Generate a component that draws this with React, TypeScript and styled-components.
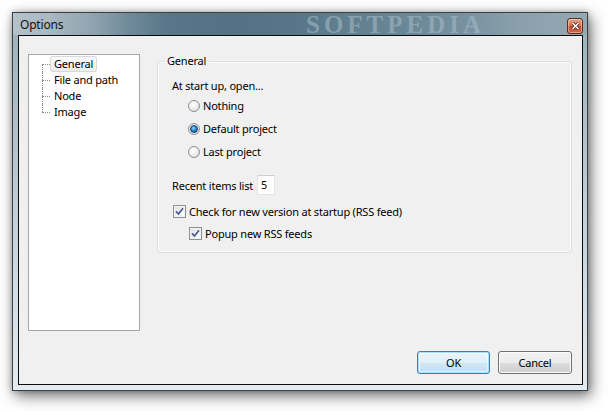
import * as React from 'react';
import styled, { createGlobalStyle } from 'styled-components';

const GlobalStyle = createGlobalStyle`
  html, body {
    margin: 0;
    padding: 0;
    background: #ffffff;
  }
  body {
    font-family: "Noto Sans", "Open Sans", sans-serif;
    font-size: 11px;
    letter-spacing: -0.2px;
    color: #000;
  }
  * {
    box-sizing: border-box;
  }
`;

const Page = styled.div`
  width: 608px;
  height: 411px;
  padding: 12px 0 0 12px;
  overflow: hidden;
`;

const Window = styled.div`
  width: 576px;
  height: 379px;
  display: flex;
  flex-direction: column;
  border: 1px solid #3c4146;
  background-color: #c6d3dc;
  box-shadow: 3px 5px 14px rgba(0, 0, 0, 0.55), 0 0 6px rgba(0, 0, 0, 0.25);
`;

const TitleBar = styled.div`
  position: relative;
  height: 22px;
  flex: none;
  display: flex;
  align-items: center;
  justify-content: space-between;
  padding: 1px 4px 0 7px;
  background-color: #5f7d8e;
  background-image: linear-gradient(90deg, #b4c2ca 0%, #aab9c2 6%, #8fa3af 14%, #718b9b 20%, #577688 27%, #537385 38%, #567688 48%, #607f8f 58%, #678594 66%, #7690a0 78%, #8aa0ac 88%, #96a9b3 100%);
`;

const TitleText = styled.span`
  font-size: 12px;
  color: #111;
  position: relative;
  z-index: 1;
`;

const Watermark = styled.span`
  position: absolute;
  left: 293px;
  top: 0;
  height: 22px;
  line-height: 24px;
  font-family: "Liberation Serif", "DejaVu Serif", serif;
  font-weight: bold;
  font-size: 25px;
  letter-spacing: 4px;
  color: rgba(170, 190, 202, 0.55);
  overflow: hidden;
  pointer-events: none;
`;

const CloseButton = styled.div`
  position: relative;
  z-index: 1;
  width: 16px;
  height: 16px;
  margin-top: 2px;
  border: 1px solid #5a2c22;
  border-radius: 3px;
  background: linear-gradient(180deg, #e9a890 0%, #d5755c 45%, #c24a2e 55%, #d4674a 100%);
  box-shadow: inset 0 0 0 1px rgba(255, 220, 200, 0.5);
  display: flex;
  align-items: center;
  justify-content: center;
`;

const Body = styled.div`
  flex: 1;
  display: flex;
  padding: 0 4px 5px 5px;
  background: linear-gradient(180deg, #9fb3bf 0%, #b6c6d0 35%, #d4dee6 75%, #e4ebf1 100%);
`;

const Client = styled.div`
  flex: 1;
  display: flex;
  flex-direction: column;
  background: #f0f0f0;
  border: 1px solid #0c0c0c;
  padding: 18px 10px 10px 9px;
`;

const TopRow = styled.div`
  display: flex;
  align-items: flex-start;
  gap: 17px;
`;

const Tree = styled.div`
  width: 112px;
  height: 277px;
  flex: none;
  background: #ffffff;
  border: 1px solid #a5a5a5;
  padding-top: 1px;
`;

const TreeItem = styled.div<{ $first?: boolean; $last?: boolean }>`
  position: relative;
  height: 16px;
  display: flex;
  align-items: center;
  padding-left: 21px;

  &::before {
    content: '';
    position: absolute;
    left: 13px;
    top: 8px;
    width: 8px;
    border-top: 1px dotted #8c8c8c;
  }

  &::after {
    content: '';
    position: absolute;
    left: 13px;
    top: ${(p) => (p.$first ? '8px' : '0')};
    height: ${(p) => (p.$first || p.$last ? '8px' : '16px')};
    border-left: 1px dotted #8c8c8c;
  }
`;

const TreeLabel = styled.span<{ $selected?: boolean }>`
  height: 16px;
  line-height: 14px;
  padding: 0 3px;
  border: 1px solid ${(p) => (p.$selected ? '#d9d9d9' : 'transparent')};
  border-radius: 2px;
  background: ${(p) =>
    p.$selected ? 'linear-gradient(180deg, #fbfbfb 0%, #ececec 100%)' : 'transparent'};
`;

const GroupBox = styled.fieldset`
  flex: 1;
  margin: 0;
  padding: 0;
  min-width: 0;
  border: 1px solid #d5dfe5;
  border-radius: 3px;
  box-shadow: inset 0 0 0 1px rgba(255, 255, 255, 0.7);
`;

const Legend = styled.legend`
  margin-left: 6px;
  padding: 0 3px;
  line-height: 14px;
  height: 14px;
`;

const GroupContent = styled.div`
  display: flex;
  flex-direction: column;
  padding: 0 8px 8px 14px;
`;

const Row = styled.div<{ $h: number; $top?: number; $indent?: number; $gap?: number }>`
  height: ${(p) => p.$h}px;
  margin-top: ${(p) => p.$top ?? 0}px;
  padding-left: ${(p) => p.$indent ?? 0}px;
  display: flex;
  align-items: center;
  gap: ${(p) => p.$gap ?? 3}px;
`;

const RadioCircle = styled.span<{ $checked?: boolean }>`
  width: 12px;
  height: 12px;
  flex: none;
  border-radius: 50%;
  border: 1px solid #8e8f8f;
  background: radial-gradient(circle at 40% 35%, #ffffff 0%, #f0f0f0 45%, #d4d4d4 100%);
  display: flex;
  align-items: center;
  justify-content: center;

  &::after {
    content: '';
    display: ${(p) => (p.$checked ? 'block' : 'none')};
    width: 6px;
    height: 6px;
    border-radius: 50%;
    border: 1px solid #0d3a66;
    background: radial-gradient(circle at 40% 35%, #8fd4fb 0%, #2a8fd6 45%, #0b5590 100%);
  }
`;

const CheckBox = styled.span`
  width: 13px;
  height: 13px;
  flex: none;
  border: 1px solid #8e8f8f;
  background: linear-gradient(135deg, #dcdcdc 0%, #f4f4f4 60%, #ffffff 100%);
  box-shadow: inset 0 0 0 1px #f4f4f4;
  display: flex;
  align-items: center;
  justify-content: center;
`;

const NumberBox = styled.div`
  width: 18px;
  height: 20px;
  margin-left: 4px;
  background: #ffffff;
  border: 1px solid #e2e6ea;
  border-top-color: #c9ced4;
  padding-left: 3px;
  line-height: 18px;
`;

const ButtonRow = styled.div`
  margin-top: auto;
  display: flex;
  justify-content: flex-end;
  gap: 8px;
`;

const Button = styled.div<{ $default?: boolean; $w: number }>`
  width: ${(p) => p.$w}px;
  height: 23px;
  border-radius: 3px;
  display: flex;
  align-items: center;
  justify-content: center;
  border: 1px solid ${(p) => (p.$default ? '#3c7fb1' : '#707070')};
  background: ${(p) =>
    p.$default
      ? 'linear-gradient(180deg, #eaf5fc 0%, #e0eff9 50%, #cfe6f5 51%, #c4e0f2 100%)'
      : 'linear-gradient(180deg, #f2f2f2 0%, #ebebeb 50%, #dddddd 51%, #cfcfcf 100%)'};
  box-shadow: ${(p) =>
    p.$default
      ? 'inset 0 0 0 1px #a7e0f8, inset 0 0 0 2px rgba(255,255,255,0.5)'
      : 'inset 0 0 0 1px #fcfcfc'};
`;

const Check = () => (
  <svg width="9" height="9" viewBox="0 0 9 9">
    <path d="M1 4.4 L3.5 7 L8 1.3" fill="none" stroke="#4a5f8f" strokeWidth="1.8" />
  </svg>
);

const CloseGlyph = () => (
  <svg width="9" height="8" viewBox="0 0 9 8">
    <path d="M1.5 1 L7.5 7 M7.5 1 L1.5 7" stroke="#4a1a10" strokeWidth="3" />
    <path d="M1.5 1 L7.5 7 M7.5 1 L1.5 7" stroke="#ffffff" strokeWidth="1.6" />
  </svg>
);

const treeItems = ['General', 'File and path', 'Node', 'Image'];

const App = () => (
  <Page>
    <GlobalStyle />
    <Window>
      <TitleBar>
        <TitleText>Options</TitleText>
        <Watermark>SOFTPEDIA</Watermark>
        <CloseButton>
          <CloseGlyph />
        </CloseButton>
      </TitleBar>
      <Body>
        <Client>
          <TopRow>
            <Tree>
              {treeItems.map((name, i) => (
                <TreeItem key={name} $first={i === 0} $last={i === treeItems.length - 1}>
                  <TreeLabel $selected={i === 0}>{name}</TreeLabel>
                </TreeItem>
              ))}
            </Tree>
            <GroupBox>
              <Legend>General</Legend>
              <GroupContent>
                <Row $h={18} $top={8}>At start up, open...</Row>
                <Row $h={23} $indent={16}>
                  <RadioCircle />
                  Nothing
                </Row>
                <Row $h={23} $indent={16}>
                  <RadioCircle $checked />
                  Default project
                </Row>
                <Row $h={23} $indent={16}>
                  <RadioCircle />
                  Last project
                </Row>
                <Row $h={20} $top={12} $gap={0}>
                  Recent items list
                  <NumberBox>5</NumberBox>
                </Row>
                <Row $h={22} $top={5} $indent={1}>
                  <CheckBox>
                    <Check />
                  </CheckBox>
                  Check for new version at startup (RSS feed)
                </Row>
                <Row $h={22} $indent={17}>
                  <CheckBox>
                    <Check />
                  </CheckBox>
                  Popup new RSS feeds
                </Row>
              </GroupContent>
            </GroupBox>
          </TopRow>
          <ButtonRow>
            <Button $default $w={73}>OK</Button>
            <Button $w={74}>Cancel</Button>
          </ButtonRow>
        </Client>
      </Body>
    </Window>
  </Page>
);

export default App;
